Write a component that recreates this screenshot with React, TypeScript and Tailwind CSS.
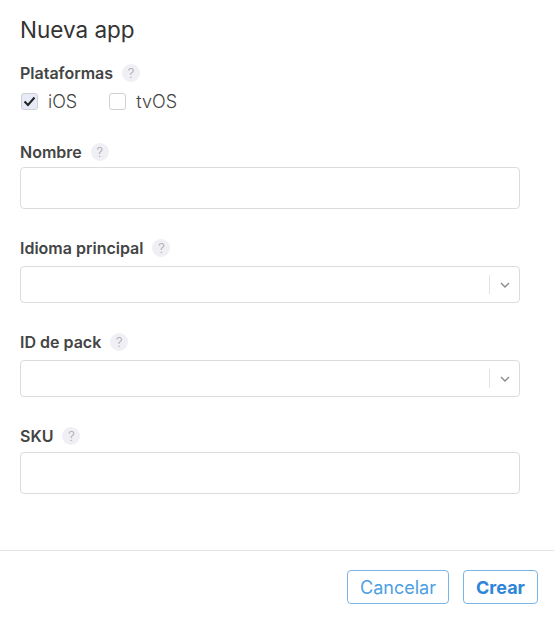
import React from 'react'

function Help() {
  return (
    <span className="ml-[9px] inline-flex h-[18px] w-[18px] items-center justify-center rounded-full bg-[#efeff4] text-[13px] font-light leading-none text-[#a4a4ac]">
      ?
    </span>
  )
}

function Label({ children, className = '' }: { children: React.ReactNode; className?: string }) {
  return (
    <div className={`flex h-[20px] items-center text-[16px] font-semibold text-[#444] ${className}`}>
      {children}
      <Help />
    </div>
  )
}

function Select() {
  return (
    <div className="mt-[8px] flex h-[37px] w-[500px] items-center rounded-[4px] border border-[#dcdcdc] bg-white">
      <div className="flex-1" />
      <div className="h-[19px] w-px bg-[#e2e2e2]" />
      <div className="flex w-[29px] items-center justify-center">
        <svg width="10" height="6" viewBox="0 0 10 6" fill="none">
          <path d="M1 1l4 4 4-4" stroke="#8a8a8a" strokeWidth="1.4" />
        </svg>
      </div>
    </div>
  )
}

function Input({ className = '' }: { className?: string }) {
  return <div className={`h-[42px] w-[500px] rounded-[4px] border border-[#dcdcdc] bg-white ${className}`} />
}

function Checkbox({ checked, label }: { checked?: boolean; label: string }) {
  return (
    <label className="flex h-[20px] items-center gap-[10px]">
      <span
        className={`flex h-[17px] w-[17px] items-center justify-center rounded-[3px] border border-[#d0d0d4] ${
          checked ? 'bg-[#e6ebf5]' : 'bg-white'
        }`}
      >
        {checked && (
          <svg width="13" height="11" viewBox="0 0 13 11" fill="none">
            <path d="M1.5 5.5l3.5 3.5 6.5-7.5" stroke="#222" strokeWidth="2" />
          </svg>
        )}
      </span>
      <span className="text-[18px] font-light text-[#444]">{label}</span>
    </label>
  )
}

export default function App() {
  return (
    <div className="h-[628px] w-[560px] bg-white font-['Inter',sans-serif] text-[#333]">
      <div className="px-5 pt-[17px]">
        <h1 className="text-[22.5px] font-normal leading-[26px] text-[#333]">Nueva app</h1>

        <Label className="mt-[20px]">Plataformas</Label>
        <div className="mt-[8px] flex items-center gap-[32px] pl-px">
          <Checkbox checked label="iOS" />
          <Checkbox label="tvOS" />
        </div>

        <Label className="mt-[31px]">Nombre</Label>
        <Input className="mt-[5px]" />

        <Label className="mt-[29px]">Idioma principal</Label>
        <Select />

        <Label className="mt-[29px]">ID de pack</Label>
        <Select />

        <Label className="mt-[29px]">SKU</Label>
        <Input className="mt-[6px] h-[41px]" />
      </div>

      <div className="mt-[56px] h-px w-[554px] bg-[#e4e4e4]" />

      <div className="flex w-[554px] justify-end gap-[14px] pr-[16px] pt-[19px]">
        <button className="h-[34px] w-[102px] rounded-[4px] border border-[#78b6ea] text-[18px] text-[#4d9fe3]">
          Cancelar
        </button>
        <button className="h-[34px] w-[75px] rounded-[4px] border border-[#78b6ea] text-[18px] font-bold text-[#2f86d8]">
          Crear
        </button>
      </div>
    </div>
  )
}
